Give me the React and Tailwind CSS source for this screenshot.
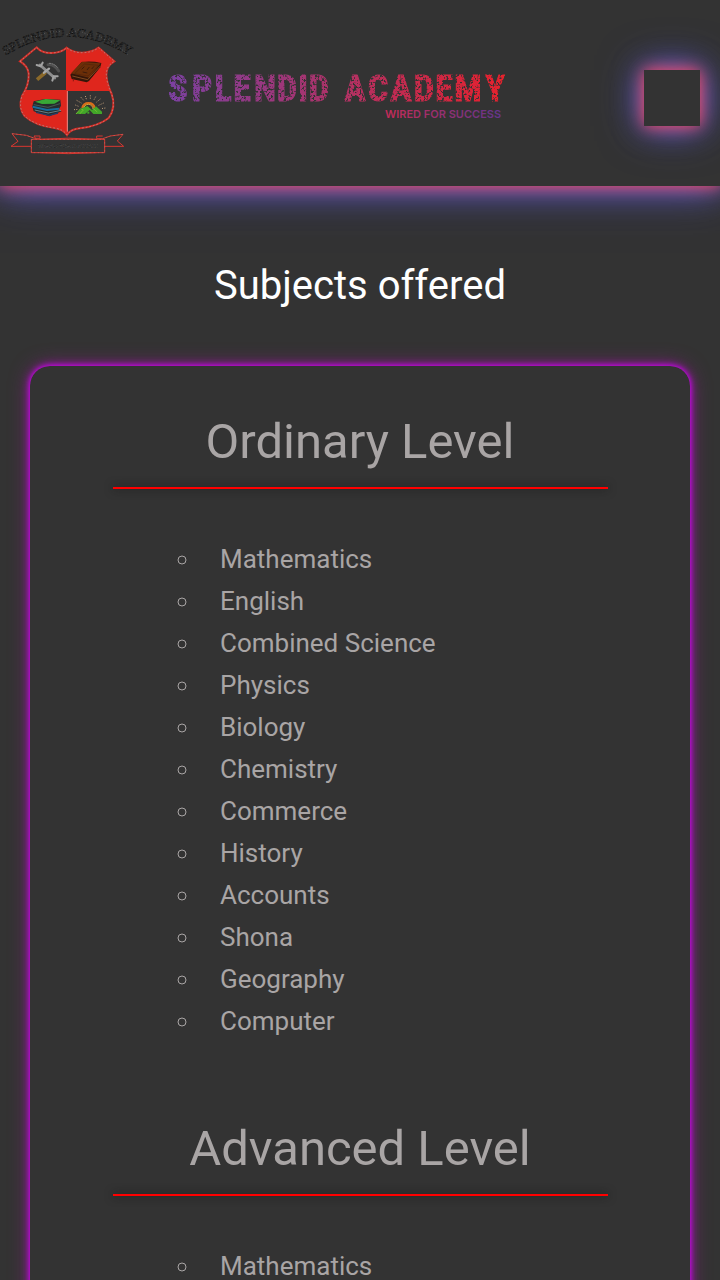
const levels = [
  {
    name: "Ordinary Level",
    subjects: [
      "Mathematics", "English", "Combined Science", "Physics", "Biology", "Chemistry",
      "Commerce", "History", "Accounts", "Shona", "Geography", "Computer",
    ],
  },
  { name: "Advanced Level", subjects: ["Mathematics"] },
];

function Crest() {
  const shield =
    "M60 124 L110 82 Q124 99 154 99 Q184 98 200 83 Q218 98 247 98 Q276 98 296 83 L343 124 Q318 138 319 166 Q321 192 335 222 Q349 262 326 294 Q296 318 240 325 Q211 328 201 345 Q190 328 164 324 Q104 316 74 288 Q54 264 66 228 Q88 194 86 160 Q83 137 60 124 Z";
  return (
    <svg className="h-39 w-35 shrink-0" viewBox="0 0 420 468" role="img" aria-label="Splendid Academy crest">
      <defs>
        <path id="motto-arc" d="M8 112 Q200 -12 396 112" />
        <clipPath id="shield-clip"><path d={shield} /></clipPath>
      </defs>
      <text fontFamily="Liberation Serif, serif" fontSize="39" fill="#2b2b2b" stroke="#0c0c0c" strokeWidth="1.5" strokeDasharray="5 3">
        <textPath href="#motto-arc" startOffset="50%" textAnchor="middle">SPLENDID ACADEMY</textPath>
      </text>
      <path d="M14 95L48 72M62 68L96 48M108 50L140 38M150 36L182 34M200 44L236 30M246 36L276 50M290 42L318 62M326 60L350 76M360 84L384 104" fill="none" stroke="#858585" strokeWidth="2" strokeDasharray="2 7" />
      <g clipPath="url(#shield-clip)">
        <path d="M198 70H350V213H198Z M50 210H203V350H50Z" fill="#df261d" />
      </g>
      <path d="M202 213V335" stroke="#ec8a85" strokeWidth="3" />
      <path d={shield} fill="none" stroke="#d42c25" strokeWidth="6" />
      <path d={shield} fill="none" stroke="#b9a19d" strokeWidth="2" strokeDasharray="5 6" />
      <g strokeLinecap="round" fill="none">
        <path d="M137 157L111 179" stroke="#8b692a" strokeWidth="11" strokeLinecap="butt" />
        <path d="M120 135L164 174" stroke="#8d8d8d" strokeWidth="9" />
        <path d="M110 135L122 139L128 128M157 182L161 169L173 169" stroke="#a3a3a3" strokeWidth="6" />
        <path d="M132 158L147 146" stroke="#a8a8a8" strokeWidth="7" />
        <path d="M144 134Q163 132 176 153" stroke="#505050" strokeWidth="9" />
        <path d="M148 130Q163 130 175 145M139 151L146 156" stroke="#999" strokeWidth="2" strokeDasharray="4 4" />
      </g>
      <g>
        <path d="M211 164L245 126Q274 122 304 129L301 142L267 183L260 187L215 177Z" fill="#351609" />
        <path d="M213 160L246 125L302 130L267 173Z" fill="#6b2e08" />
        <path d="M217 168L263 179L300 139" fill="none" stroke="#a6622b" strokeWidth="2" />
        <path d="M224 161L253 132L295 136L264 168Z" fill="none" stroke="#50230a" strokeWidth="2" />
        <path d="M245 148L253 140M261 150L268 141M275 147L282 139M248 156L262 159" stroke="#3d1b0b" strokeWidth="3" />
        <path d="M220 176V184" stroke="#861a12" strokeWidth="3" />
      </g>
      <g>
        <path d="M101 244L135 237L181 239L183 257L176 269L185 274L148 289L101 274L97 259Z" fill="#262b2c" />
        <path d="M105 245L137 237L181 241L163 251L126 252Z" fill="#38a936" />
        <path d="M101 254L144 262L180 251" fill="none" stroke="#536f6a" strokeWidth="2" />
        <path d="M98 260L141 270L178 266" fill="none" stroke="#176d9c" strokeWidth="6" />
        <path d="M104 270L145 279L183 271" fill="none" stroke="#8cabb2" strokeWidth="2" />
        <path d="M108 277L148 286L174 279" fill="none" stroke="#243d65" strokeWidth="4" />
      </g>
      <g>
        <path d="M226 255L238 260M230 241L244 249M242 231L252 242M256 228L260 240M271 226V239M287 230L281 241M301 237L289 247M311 249L296 256M316 264L302 266M222 269L235 268" stroke="#c8a47c" strokeWidth="3" strokeDasharray="3 4" />
        <path d="M247 264A19 19 0 0 1 284 264" fill="none" stroke="#d96f1a" strokeWidth="7" />
        <path d="M251 267A14 14 0 0 1 279 267" fill="none" stroke="#c9a83c" strokeWidth="3" />
        <path d="M229 281L246 265L262 258L276 270L288 259L306 275V282H280L269 270L255 282Z" fill="#42a629" />
        <path d="M228 282L242 266L250 270L239 282M279 265L292 276" fill="none" stroke="#6fc02f" strokeWidth="3" />
        <path d="M262 281V275H268V281Z" fill="#42a629" />
      </g>
      <g fill="none" stroke="#d83730" strokeWidth="3">
        <path d="M94 358H314V398H94Z" />
        <path d="M94 379H33L54 364L36 341L79 346L104 355H120V348H102L108 357M314 379H371L352 363L369 343L331 348L308 356H290V348H308" />
        <path d="M120 358Q205 351 290 358M120 398Q205 404 290 398" />
      </g>
      <path d="M94 358H314V398H94ZM36 341L79 346L104 355M369 343L331 348L308 356" fill="none" stroke="#a99793" strokeWidth="1" strokeDasharray="5 7" />
      <text x="204" y="384" textAnchor="middle" fontFamily="Liberation Serif, serif" fontSize="18" fill="#1c1c1c" stroke="#808080" strokeWidth="0.5" strokeDasharray="3 2">WIRED FOR SUCCESS</text>
    </svg>
  );
}

function Wordmark() {
  return (
    <svg className="h-[70px] w-90 shrink-0" viewBox="160 63 360 70" role="img" aria-label="Splendid Academy, wired for success">
      <defs>
        <linearGradient id="name-fill" gradientUnits="userSpaceOnUse" x1="170" y1="0" x2="505" y2="0">
          <stop offset="0" stopColor="#7c40a0" />
          <stop offset="0.48" stopColor="#ad3269" />
          <stop offset="1" stopColor="#e8212c" />
        </linearGradient>
        <linearGradient id="tag-fill" gradientUnits="userSpaceOnUse" x1="385" y1="0" x2="500" y2="0">
          <stop offset="0" stopColor="#c52b57" />
          <stop offset="1" stopColor="#65358c" />
        </linearGradient>
        <filter id="worn" x="0" y="0" width="1" height="1">
          <feTurbulence type="fractalNoise" baseFrequency="0.45" numOctaves="2" seed="8" />
          <feColorMatrix values="0 0 0 0 0  0 0 0 0 0  0 0 0 0 0  0 0 0 -7 4.7" result="n" />
          <feComposite in="SourceGraphic" in2="n" operator="in" />
        </filter>
      </defs>
      <text
        x="178 202 223 242 265 287 303 319 355 378 401 424 444 468 495"
        y="101"
        textAnchor="middle"
        fontFamily="Roboto Condensed, Open Sans Condensed, Roboto, sans-serif"
        fontWeight="700"
        fontSize="36"
        fill="url(#name-fill)"
        stroke="url(#name-fill)"
        strokeWidth="1"
        filter="url(#worn)"
      >
        SPLENDIDACADEMY
      </text>
      <text x="385" y="118" fontFamily="Inter, sans-serif" fontWeight="600" fontSize="11" fill="url(#tag-fill)">WIRED FOR SUCCESS</text>
    </svg>
  );
}

export default function App() {
  return (
    <div className="min-h-screen overflow-x-hidden bg-[#333] font-['Roboto',sans-serif] text-[#a9a5a5]">
      <header className="flex items-center justify-between pt-5 pr-5 pb-2.5 shadow-[0_0_15px_#ff4055,0_0_30px_#7d78e0,0_0_45px_#3c3ca0]">
        <div className="flex items-center gap-5">
          <Crest />
          <Wordmark />
        </div>
        <button type="button" aria-label="Menu" className="size-14 bg-[#333] shadow-[0_0_15px_#ff4055,0_0_30px_#7d78e0,0_0_45px_#3c3ca0]" />
      </header>
      <main className="px-[30px] pt-[75px]">
        <h1 className="text-center text-[40px] leading-[50px] text-white">Subjects offered</h1>
        <div className="mt-[55px] rounded-[20px] pt-[46px] pb-16 shadow-[0_0_5px_#d000f0,0_0_10px_#b010d0,0_0_20px_#80207a]">
          {levels.map((level) => (
            <section key={level.name} className="pb-[77px]">
              <h2 className="text-center text-[49px] leading-[60px]">{level.name}</h2>
              <hr className="mx-auto mt-[15px] h-0.5 w-3/4 border-0 bg-[#ff0000] shadow-[0_0_10px_#111]" />
              <ul className="mt-[49px] ml-[171px] list-[circle] text-[26px] leading-[42px]">
                {level.subjects.map((subject) => (
                  <li key={subject} className="pl-[19px]">{subject}</li>
                ))}
              </ul>
            </section>
          ))}
        </div>
      </main>
    </div>
  );
}
